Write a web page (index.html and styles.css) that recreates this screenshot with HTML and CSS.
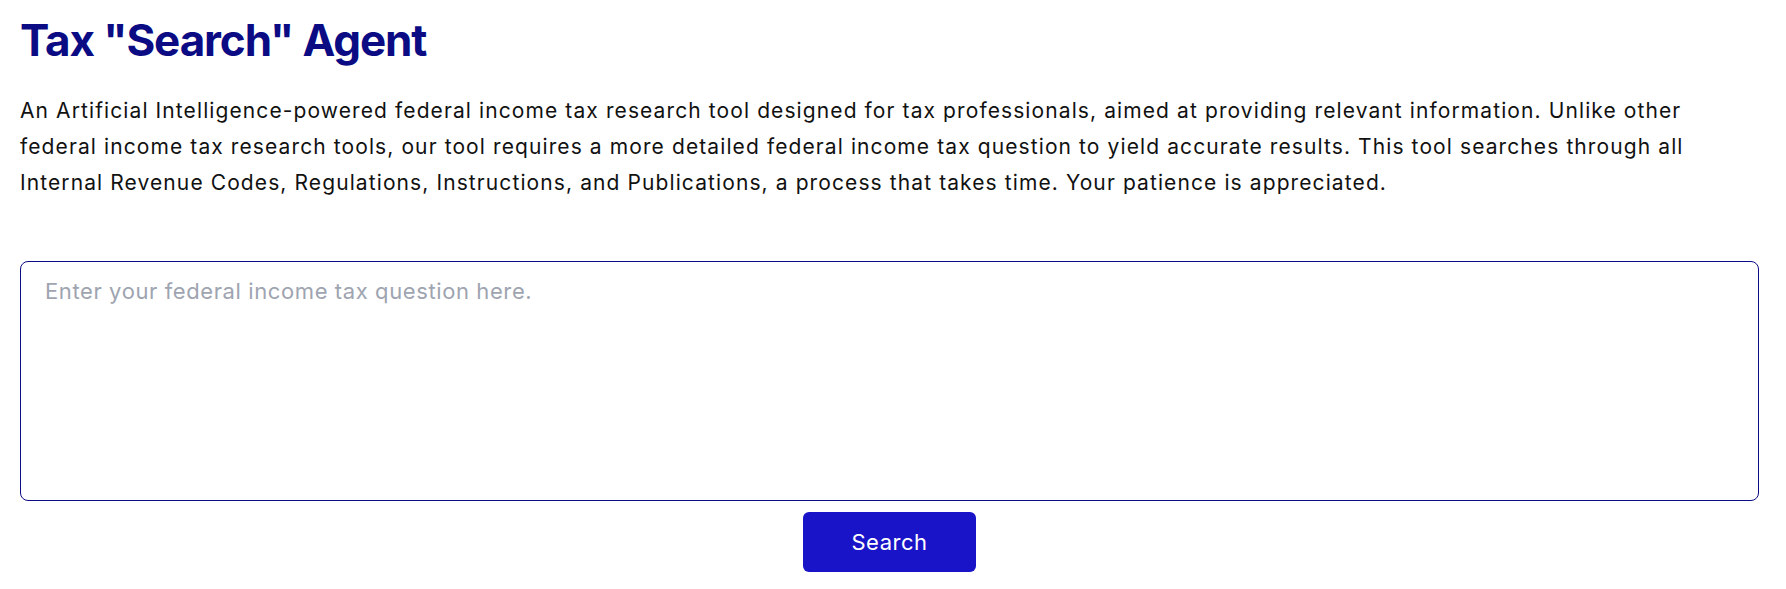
FILE: index.html
```html
<!DOCTYPE html>
<html lang="en">
<head>
<meta charset="utf-8">
<title>Tax "Search" Agent</title>
<link rel="stylesheet" href="styles.css">
</head>
<body>
<main class="page">
  <h1 class="title">Tax "Search" Agent</h1>
  <p class="intro">An Artificial Intelligence-powered federal income tax research tool designed for tax professionals, aimed at providing relevant information. Unlike other federal income tax research tools, our tool requires a more detailed federal income tax question to yield accurate results. This tool searches through all Internal Revenue Codes, Regulations, Instructions, and Publications, a process that takes time. Your patience is appreciated.</p>
  <form class="search-form">
    <textarea class="question" placeholder="Enter your federal income tax question here."></textarea>
    <button type="button" class="search-btn">Search</button>
  </form>
</main>
</body>
</html>
```

FILE: styles.css
```css
* { box-sizing: border-box; }
html, body { margin: 0; padding: 0; background: #fff; }
body { font-family: Inter, "Noto Sans", sans-serif; color: #111; }
.page {
  width: 1739px;
  margin-left: 20px;
  padding-top: 12px;
}
.title {
  margin: 0;
  font-size: 44px;
  line-height: 56px;
  font-weight: 700;
  color: #0b0b84;
  letter-spacing: -1.1px;
}
.intro {
  margin: 25px 0 0;
  font-size: 21px;
  line-height: 36px;
  letter-spacing: 1.1px;
  color: #111;
}
.search-form {
  margin-top: 60px;
  display: flex;
  flex-direction: column;
  align-items: center;
  gap: 11px;
}
.question {
  display: block;
  width: 100%;
  height: 240px;
  border: 1px solid #0b0b84;
  border-radius: 8px;
  padding: 14px 24px;
  font-family: inherit;
  font-size: 22px;
  line-height: 30px;
  letter-spacing: 0.6px;
  resize: none;
  outline: none;
}
.question::placeholder { color: #9ea4b0; }
.search-btn {
  width: 173px;
  height: 60px;
  border: none;
  border-radius: 6px;
  background: #1a14c8;
  color: #fff;
  font-family: inherit;
  font-size: 22px;
  letter-spacing: 0.5px;
  cursor: pointer;
}
```
